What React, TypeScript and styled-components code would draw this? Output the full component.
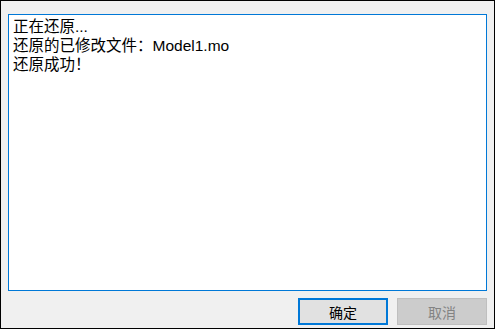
import React from "react";
import styled, { createGlobalStyle } from "styled-components";

const GlobalStyle = createGlobalStyle`
  html, body {
    margin: 0;
    padding: 0;
    background: #f0f0f0;
  }
  * {
    box-sizing: border-box;
  }
`;

const Window = styled.div`
  width: 495px;
  height: 329px;
  background: #f0f0f0;
  border: 1px solid #000;
  display: flex;
  flex-direction: column;
  padding: 13px 7px 3px 7px;
  font-family: "Liberation Sans", "Noto Sans CJK SC", sans-serif;
`;

const LogBox = styled.div`
  height: 278px;
  background: #fff;
  border: 1px solid #0078d7;
  padding: 2px 4px;
  font-size: 15.5px;
  line-height: 19px;
  color: #000;
`;

const Line = styled.div`
  white-space: nowrap;
`;

const Footer = styled.div`
  display: flex;
  justify-content: flex-end;
  gap: 9px;
  margin-top: 7px;
`;

const Button = styled.button<{ $primary?: boolean }>`
  width: 90px;
  height: 27px;
  font-family: "Liberation Sans", "Noto Sans CJK SC", sans-serif;
  font-size: 14px;
  padding: 0;
  background: ${(p) => (p.$primary ? "#e1e1e1" : "#cccccc")};
  border: ${(p) => (p.$primary ? "2px solid #0078d7" : "1px solid #bfbfbf")};
  color: ${(p) => (p.$primary ? "#000" : "#838383")};
  border-radius: 0;
`;

export default function App() {
  return (
    <>
      <GlobalStyle />
      <Window>
        <LogBox>
          <Line>正在还原...</Line>
          <Line>还原的已修改文件：Model1.mo</Line>
          <Line>还原成功！</Line>
        </LogBox>
        <Footer>
          <Button $primary>确定</Button>
          <Button disabled>取消</Button>
        </Footer>
      </Window>
    </>
  );
}
